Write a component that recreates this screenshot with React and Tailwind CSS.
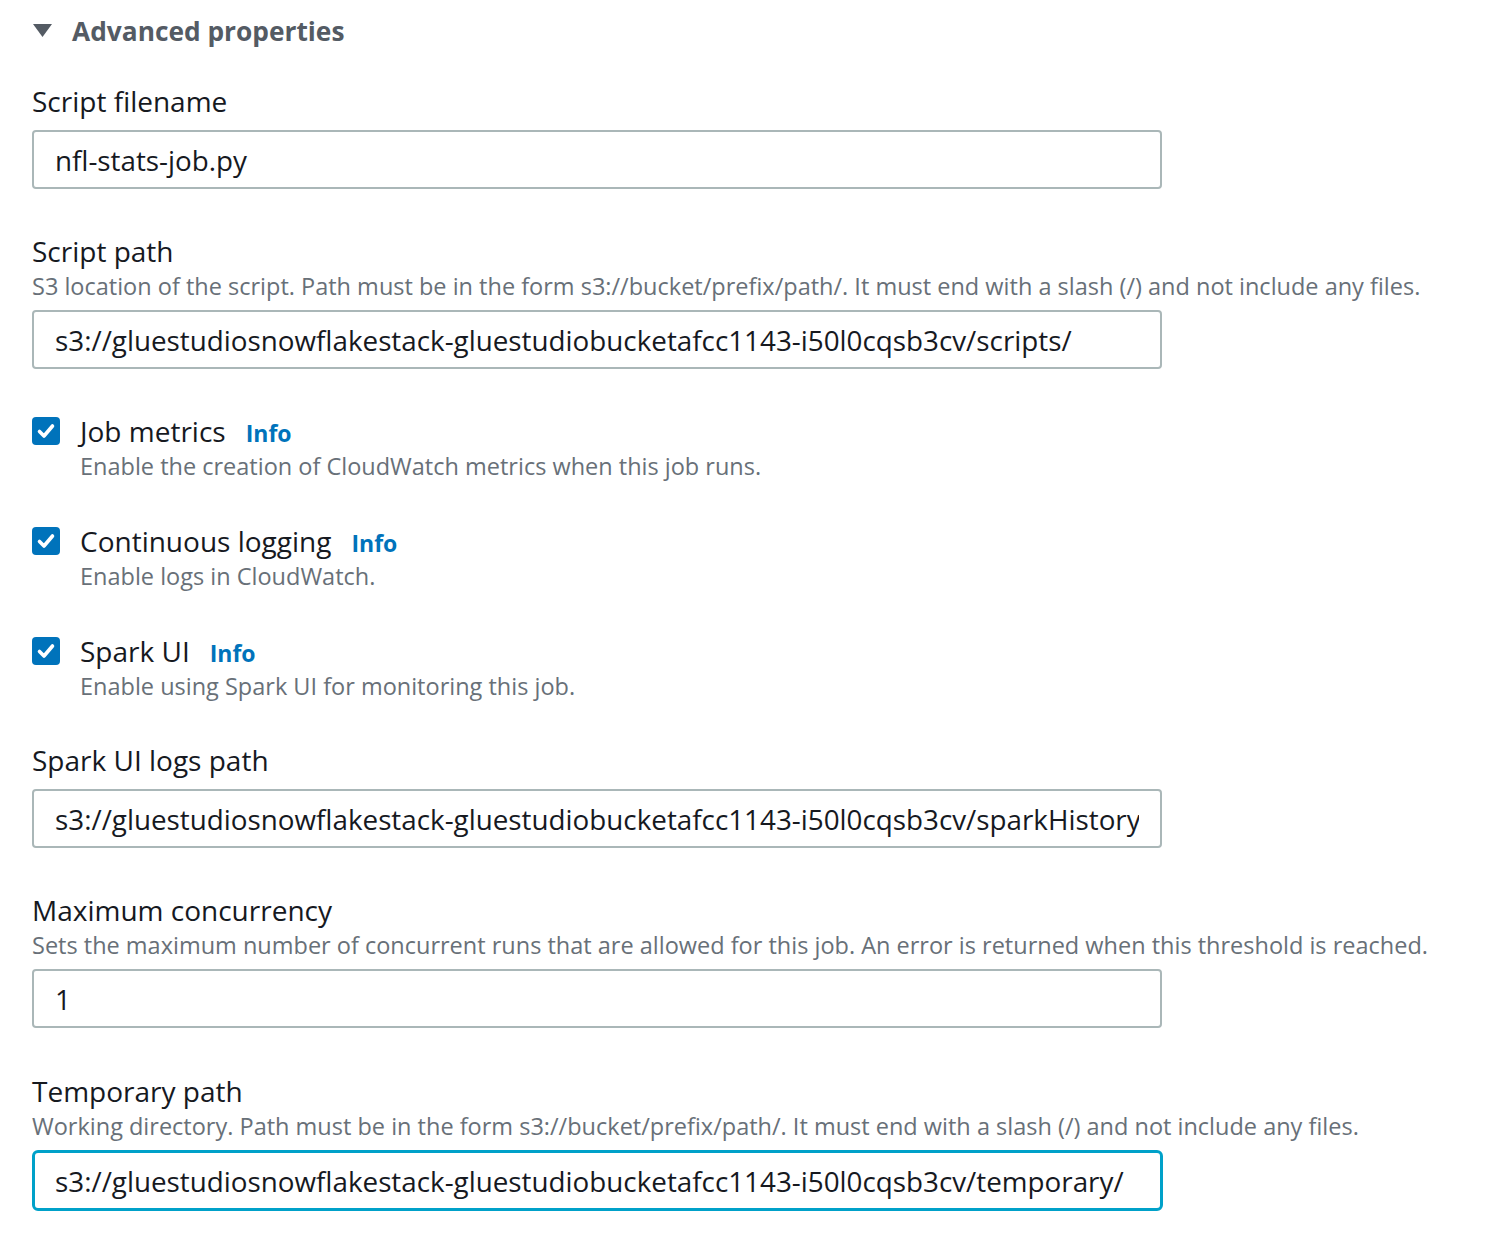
const font = { fontFamily: '"Open Sans", "Noto Sans", sans-serif' };

const Field = ({ label, description, value, focused, className }) => (
    <div className={'flex flex-col ' + (className || '')}>
        <label className="text-[28px] leading-[40px] text-[#16191f]">{label}</label>
        {description && (
            <div className="text-[23.5px] leading-[30px] text-[#687078]">{description}</div>
        )}
        <input
            type="text"
            defaultValue={value}
            readOnly
            className={
                focused
                    ? 'mt-[9px] w-[1131px] h-[61px] px-[20px] text-[27.8px] text-[#16191f] bg-white border-[3px] border-[#00a1c9] rounded-[6px] outline-none'
                    : 'mt-[9px] w-[1130px] h-[59px] px-[21px] text-[27.8px] text-[#16191f] bg-white border-2 border-[#aab7b8] rounded-[4px] outline-none'
            }
        />
    </div>
);

const CheckField = ({ label, description }) => (
    <div className="flex gap-[20px]">
        <div className="pt-[6px]">
            <div className="w-[28px] h-[28px] rounded-[4px] bg-[#0073bb] flex items-center justify-center">
                <svg width="20" height="20" viewBox="0 0 20 20">
                    <path d="M3.5 10.5 L8 15 L16.5 5" fill="none" stroke="white" strokeWidth="3.6" strokeLinecap="round" strokeLinejoin="round" />
                </svg>
            </div>
        </div>
        <div className="flex flex-col">
            <div className="flex items-baseline gap-[20px]">
                <span className="text-[28px] leading-[40px] text-[#16191f]">{label}</span>
                <span className="text-[23px] font-bold text-[#0073bb]">Info</span>
            </div>
            <div className="text-[23.5px] leading-[30px] text-[#687078]">{description}</div>
        </div>
    </div>
);

export default function App() {
    return (
        <div className="min-h-screen bg-white pl-[32px] pt-[11px]" style={font}>
            <div className="flex items-center gap-[20px]">
                <svg width="19" height="14" viewBox="0 0 19 14" className="ml-[1px]">
                    <path d="M0 0 H19 L9.5 13 Z" fill="#545b64" />
                </svg>
                <span className="text-[26.3px] leading-[40px] font-bold text-[#545b64]">Advanced properties</span>
            </div>

            <div className="mt-[30px] flex flex-col">
                <Field label="Script filename" value="nfl-stats-job.py" />
                <Field
                    className="mt-[42px]"
                    label="Script path"
                    description="S3 location of the script. Path must be in the form s3://bucket/prefix/path/. It must end with a slash (/) and not include any files."
                    value="s3://gluestudiosnowflakestack-gluestudiobucketafcc1143-i50l0cqsb3cv/scripts/"
                />
                <div className="mt-[42px] flex flex-col gap-[40px]">
                    <CheckField label="Job metrics" description="Enable the creation of CloudWatch metrics when this job runs." />
                    <CheckField label="Continuous logging" description="Enable logs in CloudWatch." />
                    <CheckField label="Spark UI" description="Enable using Spark UI for monitoring this job." />
                </div>
                <Field
                    className="mt-[39px]"
                    label="Spark UI logs path"
                    value="s3://gluestudiosnowflakestack-gluestudiobucketafcc1143-i50l0cqsb3cv/sparkHistoryLogs/"
                />
                <Field
                    className="mt-[42px]"
                    label="Maximum concurrency"
                    description="Sets the maximum number of concurrent runs that are allowed for this job. An error is returned when this threshold is reached."
                    value="1"
                />
                <Field
                    className="mt-[43px]"
                    label="Temporary path"
                    description="Working directory. Path must be in the form s3://bucket/prefix/path/. It must end with a slash (/) and not include any files."
                    value="s3://gluestudiosnowflakestack-gluestudiobucketafcc1143-i50l0cqsb3cv/temporary/"
                    focused
                />
            </div>
        </div>
    );
}
